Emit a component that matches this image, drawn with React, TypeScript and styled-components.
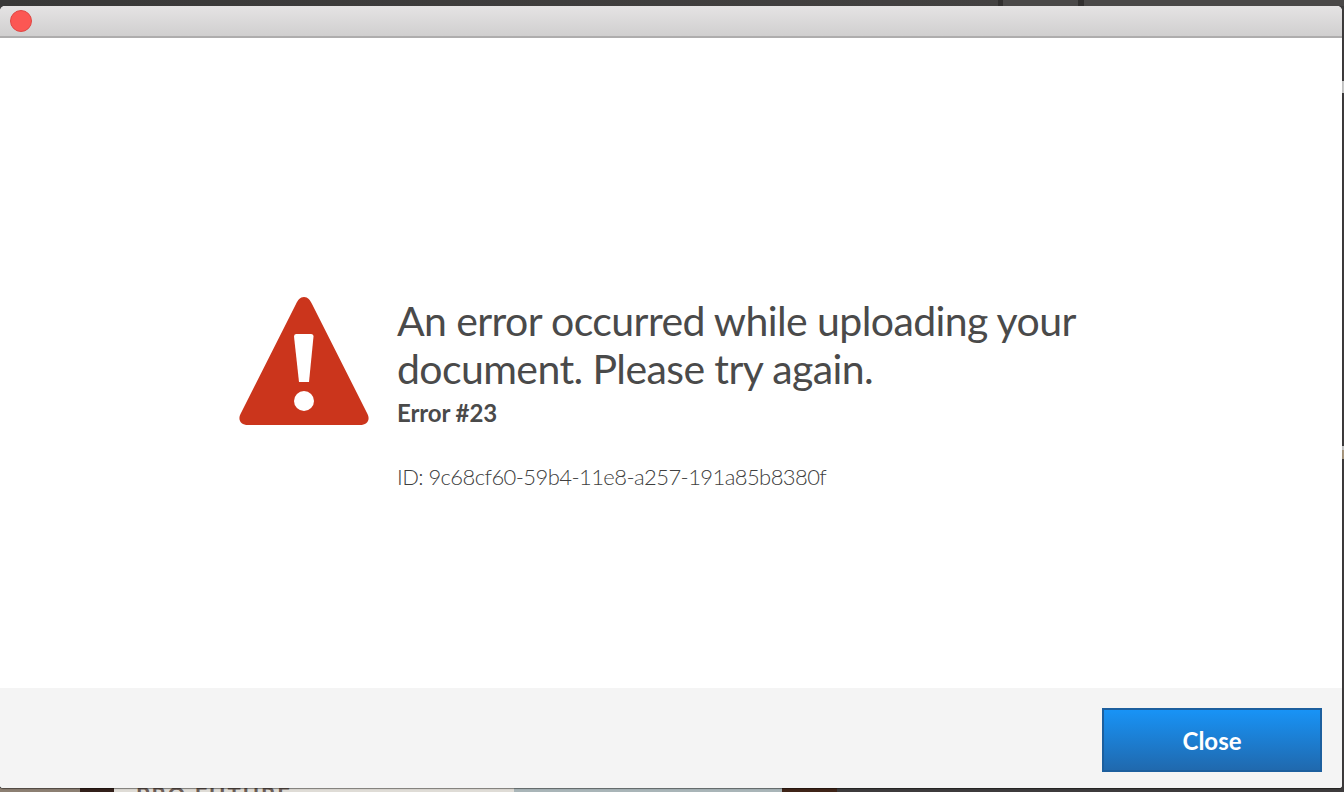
import React from "react";
import styled, { createGlobalStyle } from "styled-components";

const GlobalStyle = createGlobalStyle`
    html, body {
        margin: 0;
        padding: 0;
        background: #3d3b3c;
    }
`;

const Page = styled.div`
    width: 1344px;
    height: 792px;
    display: flex;
    flex-direction: column;
    overflow: hidden;
    font-family: Lato, "Open Sans", sans-serif;
    color: #4a4a4a;
`;

const TopStrip = styled.div`
    height: 6px;
    flex: none;
    display: flex;
`;

const MiddleRow = styled.div`
    height: 782px;
    flex: none;
    display: flex;
`;

const Window = styled.div`
    width: 1342px;
    flex: none;
    display: flex;
    flex-direction: column;
    position: relative;
    z-index: 1;
    background: #fff;
    border-radius: 5px 5px 3px 3px;
    box-shadow: 0 1px 1px rgba(0, 0, 0, 0.45);
    overflow: hidden;
`;

const Gutter = styled.div`
    flex: 1;
    display: flex;
    flex-direction: column;
    background: #3d3b3c;
`;

const GutterPiece = styled.div<{ $height: number; $color: string }>`
    height: ${(props) => props.$height}px;
    flex: none;
    background: ${(props) => props.$color};
`;

const TitleBar = styled.div`
    height: 32px;
    flex: none;
    box-sizing: border-box;
    display: flex;
    align-items: center;
    padding-left: 10px;
    background: linear-gradient(#e5e3e4, #d0cfcf);
    border-bottom: 2px solid #aeadad;
`;

const CloseDot = styled.div`
    width: 22px;
    height: 22px;
    box-sizing: border-box;
    border-radius: 50%;
    background: #fc5753;
    border: 1px solid #df4744;
`;

const Content = styled.div`
    flex: 1;
    display: flex;
    align-items: flex-start;
    padding: 258px 0 0 239px;
`;

const WarningIcon = styled.svg`
    width: 130px;
    height: 130px;
    flex: none;
    margin-right: 28px;
`;

const Message = styled.div`
    display: flex;
    flex-direction: column;
    margin-top: 1px;
`;

const Title = styled.h1`
    margin: 0;
    width: 700px;
    font-size: 41px;
    line-height: 48px;
    font-weight: 400;
    letter-spacing: -0.6px;
`;

const ErrorCode = styled.div`
    margin-top: 6px;
    font-size: 24px;
    line-height: 28px;
    font-weight: 700;
    letter-spacing: -0.1px;
`;

const ErrorId = styled.div`
    margin-top: 36px;
    font-size: 22px;
    line-height: 28px;
    font-weight: 300;
    letter-spacing: -0.58px;
    color: #404040;
`;

const Footer = styled.div`
    height: 100px;
    flex: none;
    box-sizing: border-box;
    display: flex;
    justify-content: flex-end;
    padding: 20px 20px 0 0;
    background: #f4f4f4;
`;

const CloseButton = styled.button`
    width: 220px;
    height: 64px;
    box-sizing: border-box;
    border: 2px solid #1c5f9e;
    border-radius: 0;
    padding: 0;
    background: linear-gradient(#1893f6, #2069ae);
    color: #fff;
    font-family: inherit;
    font-size: 24px;
    font-weight: 700;
`;

const BottomStrip = styled.div`
    height: 4px;
    flex: none;
    display: flex;
    overflow: hidden;
`;

const Segment = styled.div<{ $width: number; $color: string }>`
    width: ${(props) => props.$width}px;
    flex: none;
    background: ${(props) => props.$color};
`;

const PeekText = styled(Segment)`
    box-sizing: border-box;
    padding-left: 22px;
    color: #6b5d57;
    font-size: 22px;
    line-height: 26px;
    letter-spacing: 2px;
    font-weight: 700;
    white-space: nowrap;

    span {
        display: block;
        margin-top: -5px;
    }
`;

export default function App() {
    return (
        <Page>
            <GlobalStyle />
            <TopStrip>
                <Segment $width={998} $color="linear-gradient(90deg, #393838, #434141)" />
                <Segment $width={5} $color="#312f2f" />
                <Segment $width={75} $color="#4a4848" />
                <Segment $width={6} $color="#312f2f" />
                <Segment $width={260} $color="#4a4848" />
            </TopStrip>
            <MiddleRow>
                <Window>
                    <TitleBar>
                        <CloseDot />
                    </TitleBar>
                    <Content>
                        <WarningIcon viewBox="0 0 130 130">
                            <path
                                fill="#cb351c"
                                d="M65 1 C61 1 59 4 57 8 L2 117 C-2 124 2 129 9 129 L121 129 C128 129 132 124 128 117 L73 8 C71 4 69 1 65 1 Z"
                            />
                            <path
                                fill="#fff"
                                d="M57 38 L72 38 Q74.5 38 74.5 40.5 L70 86 L60 86 L55 40.5 Q55 38 57 38 Z"
                            />
                            <circle cx="65" cy="105" r="10" fill="#fff" />
                        </WarningIcon>
                        <Message>
                            <Title>An error occurred while uploading your document. Please try again.</Title>
                            <ErrorCode>Error #23</ErrorCode>
                            <ErrorId>ID: 9c68cf60-59b4-11e8-a257-191a85b8380f</ErrorId>
                        </Message>
                    </Content>
                    <Footer>
                        <CloseButton>Close</CloseButton>
                    </Footer>
                </Window>
                <Gutter>
                    <GutterPiece $height={75} $color="#3d3b3c" />
                    <GutterPiece $height={12} $color="#c9c9c9" />
                    <GutterPiece $height={353} $color="#3d3b3c" />
                    <GutterPiece $height={4} $color="#c9c9c9" />
                    <GutterPiece $height={9} $color="#a8977f" />
                </Gutter>
            </MiddleRow>
            <BottomStrip>
                <Segment $width={80} $color="#8c7f72" />
                <Segment $width={34} $color="#33201a" />
                <PeekText $width={400} $color="#dfdcd6">
                    <span>PRO FUTURE</span>
                </PeekText>
                <Segment $width={268} $color="#a9b5b8" />
                <Segment $width={55} $color="#3f2418" />
                <Segment $width={507} $color="#3d3b3c" />
            </BottomStrip>
        </Page>
    );
}
